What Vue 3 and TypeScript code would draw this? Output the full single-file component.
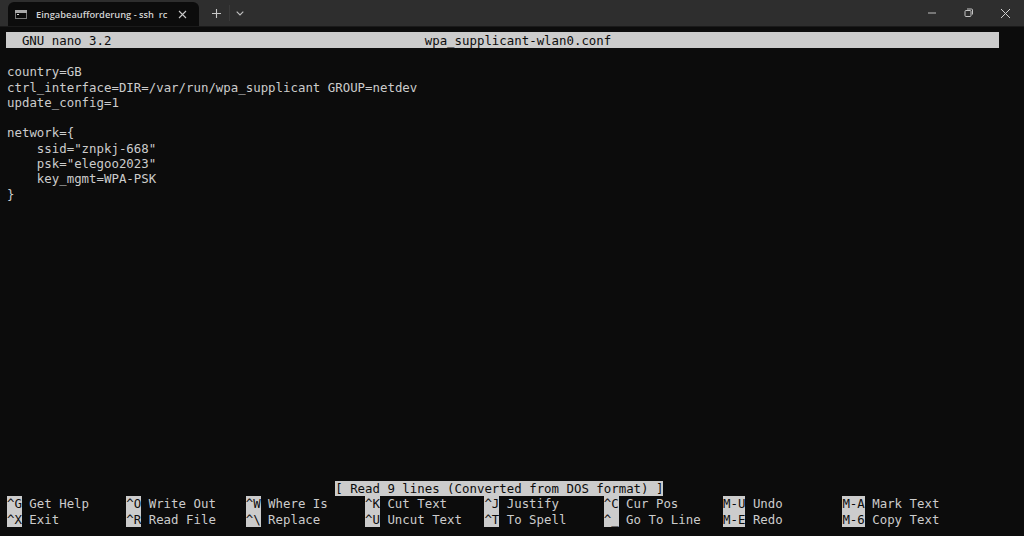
<script setup lang="ts">
interface Shortcut { key: string; label: string }

const configLines: string[] = [
  '',
  'country=GB',
  'ctrl_interface=DIR=/var/run/wpa_supplicant GROUP=netdev',
  'update_config=1',
  '',
  'network={',
  '    ssid="znpkj-668"',
  '    psk="elegoo2023"',
  '    key_mgmt=WPA-PSK',
  '}',
]

const shortcuts: Shortcut[] = [
  { key: '^G', label: 'Get Help' },
  { key: '^O', label: 'Write Out' },
  { key: '^W', label: 'Where Is' },
  { key: '^K', label: 'Cut Text' },
  { key: '^J', label: 'Justify' },
  { key: '^C', label: 'Cur Pos' },
  { key: 'M-U', label: 'Undo' },
  { key: 'M-A', label: 'Mark Text' },
  { key: '^X', label: 'Exit' },
  { key: '^R', label: 'Read File' },
  { key: '^\\', label: 'Replace' },
  { key: '^U', label: 'Uncut Text' },
  { key: '^T', label: 'To Spell' },
  { key: '^_', label: 'Go To Line' },
  { key: 'M-E', label: 'Redo' },
  { key: 'M-6', label: 'Copy Text' },
]
</script>

<template>
  <div class="window">
    <header class="titlebar">
      <div class="tab">
        <svg class="tab-icon" width="12" height="9" viewBox="0 0 12 9" aria-hidden="true">
          <rect x="0.5" y="0.5" width="11" height="8" fill="#0a0a0a" stroke="#777777" />
          <rect x="0" y="0" width="12" height="3" fill="#a8a8a8" />
          <path d="M2 4.5h2" stroke="#d8d8d8" stroke-width="1" />
        </svg>
        <span class="tab-title">Eingabeaufforderung - ssh&nbsp; rc</span>
        <svg class="tab-close" width="9" height="9" viewBox="0 0 9 9" aria-hidden="true">
          <path d="M1 1l7 7M8 1L1 8" stroke="#c8c8c8" stroke-width="1.1" fill="none" />
        </svg>
      </div>
      <button class="icon-btn plus" aria-label="Neuer Tab">
        <svg width="9" height="9" viewBox="0 0 9 9" aria-hidden="true">
          <path d="M4.5 0v9M0 4.5h9" stroke="#c8c8c8" stroke-width="1.1" fill="none" />
        </svg>
      </button>
      <span class="separator"></span>
      <button class="icon-btn chevron" aria-label="Menü">
        <svg width="8" height="5" viewBox="0 0 8 5" aria-hidden="true">
          <path d="M.7.7 4 4 7.3.7" stroke="#c0c0c0" stroke-width="1.1" fill="none" />
        </svg>
      </button>
      <div class="controls">
        <button class="ctrl" aria-label="Minimieren">
          <svg width="10" height="2" viewBox="0 0 10 2" aria-hidden="true">
            <path d="M1 1h8" stroke="#bdbdbd" stroke-width="1" />
          </svg>
        </button>
        <button class="ctrl" aria-label="Wiederherstellen">
          <svg width="10" height="10" viewBox="0 0 10 10" aria-hidden="true">
            <rect x="1" y="2.5" width="6" height="6" rx="1" fill="none" stroke="#c4c4c4" />
            <path d="M3 1h4.5a1 1 0 0 1 1 1v4.5" fill="none" stroke="#c4c4c4" />
          </svg>
        </button>
        <button class="ctrl" aria-label="Schließen">
          <svg width="11" height="11" viewBox="0 0 11 11" aria-hidden="true">
            <path d="M1 1l9 9M10 1l-9 9" stroke="#d0d0d0" stroke-width="1" fill="none" />
          </svg>
        </button>
      </div>
    </header>

    <main class="terminal">
      <div class="topbar">
        <span class="version">GNU nano 3.2</span>
        <span>wpa_supplicant-wlan0.conf</span>
      </div>
      <div class="editor">
        <div v-for="(line, i) in configLines" :key="i" class="line">{{ line }}</div>
      </div>
      <div class="status"><span>[ Read 9 lines (Converted from DOS format) ]</span></div>
      <div class="shortcuts">
        <div v-for="s in shortcuts" :key="s.key" class="shortcut">
          <span class="key">{{ s.key }}</span><span class="label">{{ s.label }}</span>
        </div>
      </div>
    </main>
  </div>
</template>

<style>
html, body { margin: 0; background: #0c0c0c; }
</style>

<style scoped>
.window {
  width: 1024px;
  height: 536px;
  display: flex;
  flex-direction: column;
  overflow: hidden;
  background: #0c0c0c;
}
.titlebar {
  flex: none;
  height: 26px;
  display: flex;
  align-items: flex-end;
  padding-left: 8px;
  background: #2e2e2e;
  border-bottom: 1px solid #1a1a1a;
}
.tab {
  width: 191px;
  height: 24px;
  box-sizing: border-box;
  display: flex;
  align-items: center;
  padding: 0 12px 0 7px;
  background: #0c0c0c;
  border-radius: 6px 6px 0 0;
}
.tab-icon { flex: none; }
.tab-title {
  flex: 1;
  margin-left: 9px;
  white-space: nowrap;
  font: 600 9.3px "Open Sans", "Noto Sans", sans-serif;
  color: #d2d2d2;
}
.tab-close { flex: none; }
.icon-btn, .ctrl {
  border: 0;
  padding: 0;
  background: none;
  display: flex;
  align-items: center;
  justify-content: center;
}
.icon-btn { height: 26px; align-self: flex-end; }
.plus { margin-left: 12px; width: 10px; }
.separator {
  width: 1px;
  height: 16px;
  margin: 0 0 5px 8px;
  background: #3a3a3a;
}
.chevron { margin-left: 5px; width: 10px; }
.controls { margin-left: auto; display: flex; height: 26px; }
.ctrl { width: 37px; }
.terminal {
  flex: 1;
  min-height: 0;
  display: flex;
  flex-direction: column;
  padding: 5px 25px 9px 7px;
  font-family: "DejaVu Sans Mono", monospace;
  font-size: 12.4px;
  line-height: 15.3px;
  color: #cccccc;
  white-space: pre;
}
.topbar {
  display: flex;
  height: 16px;
  margin-left: -1px;
  padding-left: 1px;
  line-height: 17px;
  background: #cccccc;
  color: #0c0c0c;
}
.version {
  width: 56ch;
  box-sizing: border-box;
  padding-left: 2ch;
}
.line { height: 15.3px; }
.editor { flex: 1; margin-top: 1px; }
.status { padding-left: 44ch; }
.status span {
  background: #cccccc;
  color: #0c0c0c;
  display: inline-block;
}
.shortcuts {
  display: grid;
  grid-template-columns: repeat(8, 16ch);
}
.key {
  display: inline-block;
  width: 2ch;
  background: #cccccc;
  color: #0c0c0c;
  white-space: nowrap;
}
.shortcut:nth-child(8n + 7) .key,
.shortcut:nth-child(8n) .key { width: 3ch; }
.label { margin-left: 1ch; }
</style>
